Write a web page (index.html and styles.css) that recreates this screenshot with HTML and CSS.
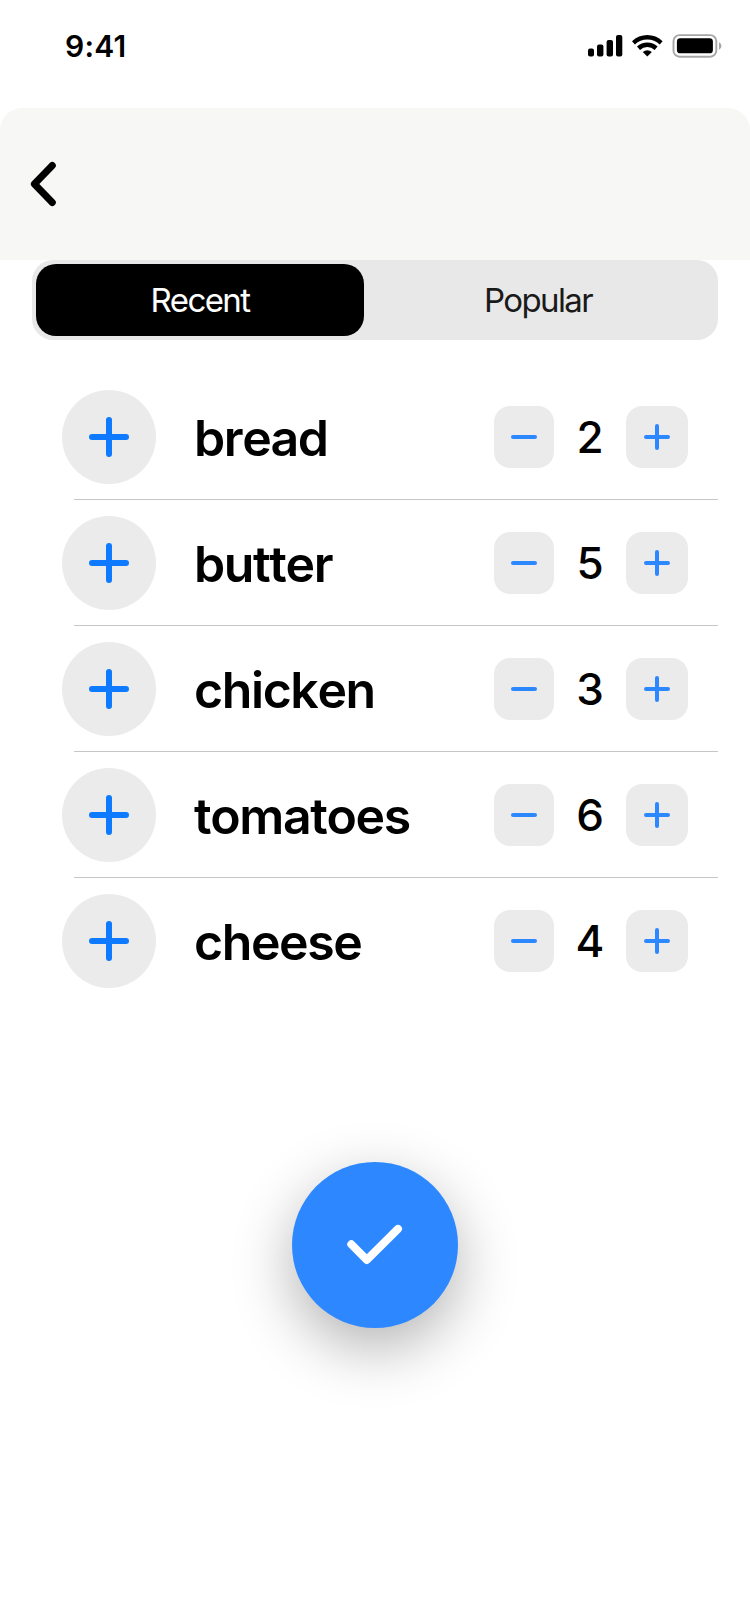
FILE: index.html
```html
<!DOCTYPE html>
<html lang="en">
<head>
<meta charset="utf-8">
<title>Add items</title>
<link rel="stylesheet" href="styles.css">
</head>
<body>
<svg class="defs" width="0" height="0" aria-hidden="true">
  <symbol id="plus-large" viewBox="0 0 40 40"><path d="M20 3v34M3 20h34" stroke-width="6"/></symbol>
  <symbol id="plus" viewBox="0 0 26 26"><path d="M13 2v22M2 13h22" stroke-width="4"/></symbol>
  <symbol id="minus" viewBox="0 0 26 26"><path d="M2 13h22" stroke-width="4"/></symbol>
</svg>
<div class="status">
  <span class="time">9:41</span>
  <svg class="indicators" width="136" height="24" viewBox="0 0 136 24">
    <rect x="0" y="14.6" width="6" height="8" rx="2"/>
    <rect x="9" y="10.4" width="6.4" height="12.2" rx="2"/>
    <rect x="18.6" y="5.9" width="6.4" height="16.7" rx="2"/>
    <rect x="28" y="1" width="6.3" height="21.6" rx="2"/>
    <path d="M44 7.2a22 22 0 0 1 30.6 0l-2.9 3.3a17.8 17.8 0 0 0-24.8 0z"/>
    <path d="M49 12.5a15 15 0 0 1 20.6 0l-3 3.4a10.8 10.8 0 0 0-14.6 0z"/>
    <path d="M54.7 18a7.7 7.7 0 0 1 9.2 0l-4.6 4.6z"/>
    <rect class="shell" x="85.5" y="1.1" width="42.8" height="21.6" rx="6"/>
    <path class="nub" d="M131 8.3v7.4a4 4 0 0 0 0-7.4z"/>
    <rect x="88.9" y="4.3" width="36" height="15" rx="3.4"/>
  </svg>
</div>
<header class="header">
  <svg class="back" width="28" height="46" viewBox="0 0 28 46"><path d="M22.3 4.5L4.4 23l17.9 18.5"/></svg>
</header>
<nav class="tabs">
  <span class="tab tab-active">Recent</span>
  <span class="tab">Popular</span>
</nav>
<main class="list">
  <div class="row"><button class="add"><svg class="icon-add"><use href="#plus-large"/></svg></button><span class="name">bread</span><div class="stepper"><button class="step step-minus"><svg class="icon"><use href="#minus"/></svg></button><span class="count">2</span><button class="step"><svg class="icon"><use href="#plus"/></svg></button></div></div>
  <div class="row"><button class="add"><svg class="icon-add"><use href="#plus-large"/></svg></button><span class="name">butter</span><div class="stepper"><button class="step step-minus"><svg class="icon"><use href="#minus"/></svg></button><span class="count">5</span><button class="step"><svg class="icon"><use href="#plus"/></svg></button></div></div>
  <div class="row"><button class="add"><svg class="icon-add"><use href="#plus-large"/></svg></button><span class="name">chicken</span><div class="stepper"><button class="step step-minus"><svg class="icon"><use href="#minus"/></svg></button><span class="count">3</span><button class="step"><svg class="icon"><use href="#plus"/></svg></button></div></div>
  <div class="row"><button class="add"><svg class="icon-add"><use href="#plus-large"/></svg></button><span class="name">tomatoes</span><div class="stepper"><button class="step step-minus"><svg class="icon"><use href="#minus"/></svg></button><span class="count">6</span><button class="step"><svg class="icon"><use href="#plus"/></svg></button></div></div>
  <div class="row"><button class="add"><svg class="icon-add"><use href="#plus-large"/></svg></button><span class="name">cheese</span><div class="stepper"><button class="step step-minus"><svg class="icon"><use href="#minus"/></svg></button><span class="count">4</span><button class="step"><svg class="icon"><use href="#plus"/></svg></button></div></div>
</main>
<button class="confirm"><svg width="56" height="40" viewBox="0 0 56 40"><path d="M4.3 19.3L19.8 34.9L51 3.9"/></svg></button>
</body>
</html>
```
FILE: styles.css
```css
* {
  box-sizing: border-box;
}

body {
  margin: 0;
  width: 750px;
  height: 1624px;
  overflow: hidden;
  background: #fff;
  color: #000;
  font-family: Inter, "Liberation Sans", sans-serif;
  display: flex;
  flex-direction: column;
}

button {
  border: 0;
  padding: 0;
  display: flex;
  align-items: center;
  justify-content: center;
}

svg {
  display: block;
  flex: none;
  overflow: visible;
}

.defs {
  position: absolute;
}

.status {
  height: 108px;
  padding: 34px 26px 0 65px;
  display: flex;
  justify-content: space-between;
  align-items: flex-start;
}

.time {
  font-size: 30px;
  line-height: 24px;
  font-weight: 600;
  letter-spacing: 0.2px;
}

.shell {
  fill: none;
  stroke: #a6a6a6;
  stroke-width: 1.9;
}

.nub {
  fill: #a6a6a6;
}

.header {
  height: 152px;
  padding-left: 30px;
  display: flex;
  align-items: center;
  background: #f7f7f5;
  border-radius: 22px 22px 0 0;
}

.back path {
  fill: none;
  stroke: #000;
  stroke-width: 7;
  stroke-linecap: round;
  stroke-linejoin: round;
}

.tabs {
  height: 80px;
  margin: 0 32px;
  padding: 4px;
  display: flex;
  gap: 10px;
  background: #e8e8e8;
  border-radius: 21px;
}

.tab {
  width: 328px;
  display: flex;
  align-items: center;
  justify-content: center;
  font-size: 33px;
  letter-spacing: -1.6px;
  color: #1a1a1a;
}

.tab-active {
  background: #000;
  color: #fff;
  border-radius: 20px;
}

.list {
  margin-top: 34px;
}

.row {
  height: 126px;
  padding: 0 62px;
  display: flex;
  align-items: center;
  background: linear-gradient(#c6c6c8, #c6c6c8) 74px 125px / 644px 1px no-repeat;
}

.row:last-child {
  background: none;
}

.add {
  width: 94px;
  height: 94px;
  border-radius: 50%;
  background: #ebebeb;
}

.icon-add {
  width: 40px;
  height: 40px;
  stroke: #0d7aff;
  stroke-linecap: round;
}

.name {
  flex: 1;
  margin-left: 38px;
  padding-top: 1px;
  font-size: 50px;
  line-height: 60px;
  font-weight: 600;
  letter-spacing: -1.4px;
  font-kerning: none;
}

.stepper {
  display: flex;
  align-items: center;
}

.step {
  width: 62px;
  height: 62px;
  border-radius: 16px;
  background: #ebebeb;
}

.step-minus {
  width: 60px;
}

.icon {
  width: 26px;
  height: 26px;
  stroke: #2d87ff;
  stroke-linecap: round;
}

.count {
  width: 72px;
  text-align: center;
  font-size: 44px;
  line-height: 52px;
  font-weight: 450;
}

.confirm {
  width: 166px;
  height: 166px;
  margin: 158px auto 0;
  border-radius: 50%;
  background: #2d87ff;
  box-shadow: 0 20px 60px rgba(0, 0, 0, 0.3);
}

.confirm path {
  fill: none;
  stroke: #fff;
  stroke-width: 8;
  stroke-linecap: round;
  stroke-linejoin: round;
}
```
